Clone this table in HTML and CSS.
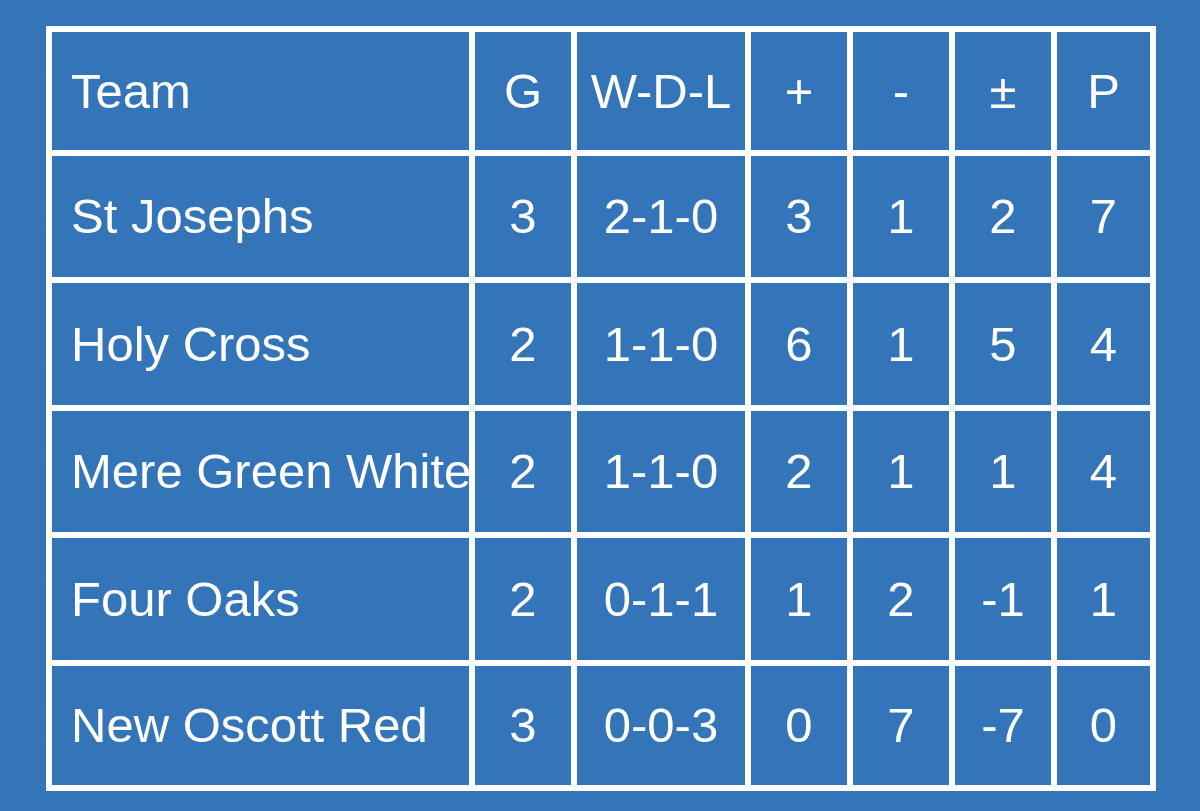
FILE: index.html
```html
<!DOCTYPE html>
<html>
<head>
<meta charset="utf-8">
<link rel="stylesheet" href="styles.css">
</head>
<body>
<table class="league">
  <colgroup>
    <col class="c-team"><col class="c-g"><col class="c-wdl"><col class="c-num"><col class="c-num"><col class="c-num"><col class="c-p">
  </colgroup>
  <tr class="r-head">
    <td class="team">Team</td><td>G</td><td>W-D-L</td><td>+</td><td>-</td><td>±</td><td>P</td>
  </tr>
  <tr class="r-a">
    <td class="team">St Josephs</td><td>3</td><td>2-1-0</td><td>3</td><td>1</td><td>2</td><td>7</td>
  </tr>
  <tr class="r-b">
    <td class="team">Holy Cross</td><td>2</td><td>1-1-0</td><td>6</td><td>1</td><td>5</td><td>4</td>
  </tr>
  <tr class="r-a">
    <td class="team">Mere Green White</td><td>2</td><td>1-1-0</td><td>2</td><td>1</td><td>1</td><td>4</td>
  </tr>
  <tr class="r-b">
    <td class="team">Four Oaks</td><td>2</td><td>0-1-1</td><td>1</td><td>2</td><td>-1</td><td>1</td>
  </tr>
  <tr class="r-last">
    <td class="team">New Oscott Red</td><td>3</td><td>0-0-3</td><td>0</td><td>7</td><td>-7</td><td>0</td>
  </tr>
</table>
</body>
</html>
```
FILE: styles.css
```css
html, body {
  margin: 0;
  background: #3375b8;
}
body {
  padding: 26px 0 0 46px;
  font-family: "Liberation Sans", Arial, sans-serif;
  color: #ffffff;
}
.league {
  table-layout: fixed;
  border-collapse: separate;
  border-spacing: 6px;
  background: #ffffff;
  width: 1109px;
}
.c-team { width: 417px; }
.c-g { width: 96px; }
.c-wdl { width: 168px; }
.c-num { width: 96px; }
.c-p { width: 93px; }
.league td {
  background: #3375b8;
  padding: 0;
  font-size: 49px;
  line-height: 1;
  text-align: center;
  vertical-align: middle;
  white-space: nowrap;
  overflow: visible;
}
.league td.team {
  text-align: left;
  padding-left: 19px;
}
.r-head td { height: 118px; }
.r-a td { height: 121px; }
.r-b td { height: 122px; }
.r-last td { height: 119px; }
```
